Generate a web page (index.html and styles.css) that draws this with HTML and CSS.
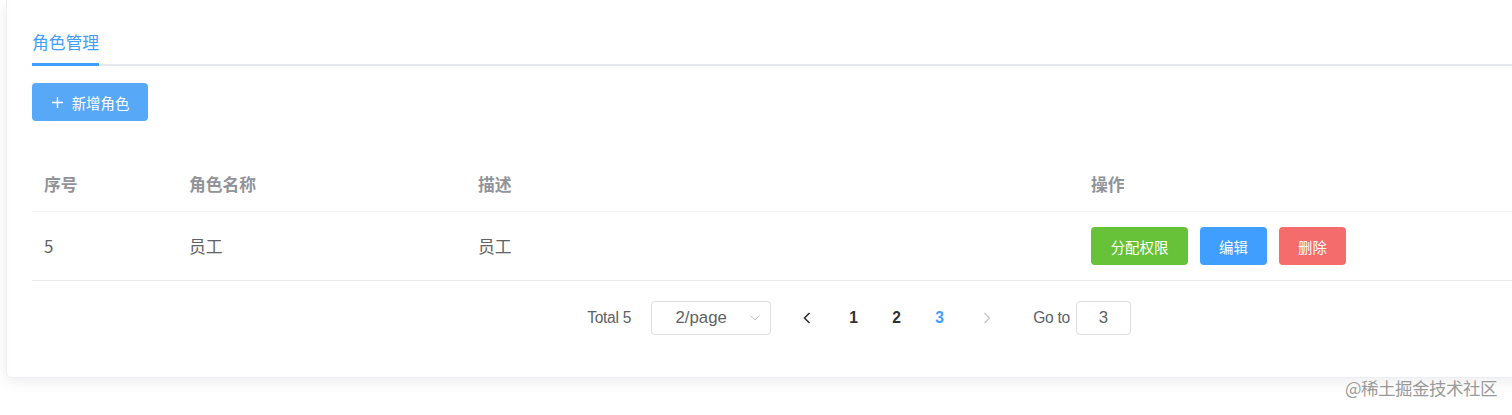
FILE: index.html
```html
<!DOCTYPE html>
<html lang="zh">
<head>
<meta charset="utf-8">
<title>角色管理</title>
<link rel="stylesheet" href="styles.css">
</head>
<body>
<div class="card">
  <div class="tabs">
    <div class="tab active">角色管理</div>
  </div>
  <div class="toolbar">
    <button class="btn btn-add">
      <svg class="plus" width="11" height="11" viewBox="0 0 11 11"><path d="M5.5 0v11M0 5.5h11" stroke="#fff" stroke-width="1.4" fill="none"/></svg>
      <span>新增角色</span>
    </button>
  </div>
  <div class="table">
    <div class="row head">
      <div class="cell">序号</div>
      <div class="cell">角色名称</div>
      <div class="cell">描述</div>
      <div class="cell">操作</div>
    </div>
    <div class="row body">
      <div class="cell">5</div>
      <div class="cell">员工</div>
      <div class="cell">员工</div>
      <div class="cell actions">
        <button class="btn sm green">分配权限</button>
        <button class="btn sm blue">编辑</button>
        <button class="btn sm red">删除</button>
      </div>
    </div>
  </div>
  <div class="pagination">
    <span class="total">Total 5</span>
    <div class="select">
      <span class="select-text">2/page</span>
      <svg class="select-arrow" width="10" height="6" viewBox="0 0 10 6"><path d="M0.5 0.5L5 5L9.5 0.5" stroke="#c0c4cc" stroke-width="1" fill="none"/></svg>
    </div>
    <span class="nav prev"><svg width="8" height="12" viewBox="0 0 8 12"><path d="M6.5 1L1.5 6L6.5 11" stroke="#303133" stroke-width="1.6" fill="none"/></svg></span>
    <ul class="pager">
      <li>1</li>
      <li>2</li>
      <li class="current">3</li>
    </ul>
    <span class="nav next"><svg width="8" height="12" viewBox="0 0 8 12"><path d="M1.5 1L6.5 6L1.5 11" stroke="#c0c4cc" stroke-width="1.3" fill="none"/></svg></span>
    <span class="jumper">Go to</span>
    <div class="jump-input">3</div>
  </div>
</div>
<div class="watermark">@稀土掘金技术社区</div>
</body>
</html>
```
FILE: styles.css
```css
html, body {
  margin: 0;
  padding: 0;
  background: #fff;
  overflow: hidden;
  width: 1512px;
  height: 415px;
  font-family: "Noto Sans CJK SC", "Liberation Sans", sans-serif;
  position: relative;
}

.card {
  box-sizing: border-box;
  width: 1706px;
  margin-left: 6px;
  background: #fff;
  border: 1px solid #ebeef5;
  border-top: 0;
  border-radius: 0 0 5px 5px;
  box-shadow: 0 3px 14px rgba(0, 0, 0, 0.08);
  padding: 17px 25px 42px 25px;
}

.tabs {
  display: flex;
  height: 47px;
  border-bottom: 2px solid #e4e7ed;
}

.tab {
  font-size: 16.8px;
  color: #303133;
  box-sizing: border-box;
}

.tab.active {
  color: #409eff;
  border-bottom: 3px solid #409eff;
  margin-bottom: -2px;
  height: 49px;
  padding-top: 3px;
  line-height: 44px;
}

.toolbar {
  margin-top: 17px;
  display: flex;
}

.btn {
  border: 0;
  border-radius: 4px;
  color: #fff;
  font-family: "Noto Sans CJK SC", sans-serif;
  font-size: 14.4px;
  height: 38px;
  display: inline-flex;
  align-items: center;
  justify-content: center;
  cursor: pointer;
}

.btn-add {
  background: #58a8f8;
  width: 116px;
  padding: 0;
  gap: 9px;
}

.btn-add .plus {
  margin-left: 1px;
}

.table {
  margin-top: 34px;
  font-size: 16.8px;
}

.row {
  display: grid;
  grid-template-columns: 145px 289px 613px 1fr;
  align-items: center;
  border-bottom: 1px solid #ebeef5;
}

.row.head {
  height: 56px;
  color: #909399;
  font-weight: bold;
  border-bottom-color: #f2f3f6;
}

.row.head .cell {
  padding-top: 2px;
}

.row.body {
  height: 68px;
  color: #606266;
  border-bottom-color: #e6e8ec;
}

.cell {
  padding-left: 12px;
}

.actions {
  display: flex;
  gap: 12px;
}

.btn.sm {
  padding: 0;
}

.green { background: #67c23a; width: 97px; }
.blue { background: #409eff; width: 67px; }
.red { background: #f56c6c; width: 67px; }

.pagination {
  margin-top: 20px;
  display: flex;
  align-items: center;
  justify-content: center;
  height: 34px;
  font-family: "Liberation Sans", "Noto Sans CJK SC", sans-serif;
  font-size: 15.6px;
  color: #606266;
}

.total {
  width: 46px;
  margin-right: 18px;
  white-space: nowrap;
  letter-spacing: -0.3px;
}

.select {
  box-sizing: border-box;
  width: 120px;
  height: 34px;
  border: 1px solid #dcdfe6;
  border-radius: 4px;
  display: flex;
  align-items: center;
}

.select-text {
  width: 66px;
  margin-left: 16px;
  text-align: center;
  font-size: 16.8px;
  color: #606266;
}

.select-arrow {
  margin-left: auto;
  margin-right: 10px;
}

.nav {
  width: 43px;
  height: 34px;
  display: flex;
  align-items: center;
  justify-content: center;
}

.prev { margin-left: 14px; margin-right: 4px; }
.next { margin-left: 4px; }

.pager {
  list-style: none;
  margin: 0;
  padding: 0;
  display: flex;
}

.pager li {
  width: 43px;
  height: 34px;
  line-height: 34px;
  text-align: center;
  font-weight: bold;
  color: #303133;
  font-size: 15.6px;
}

.pager li.current {
  color: #409eff;
}

.jumper {
  margin-left: 25px;
  margin-right: 6px;
  white-space: nowrap;
  letter-spacing: -0.3px;
}

.jump-input {
  box-sizing: border-box;
  width: 55px;
  height: 34px;
  border: 1px solid #dcdfe6;
  border-radius: 4px;
  text-align: center;
  line-height: 32px;
  font-size: 16.8px;
  color: #606266;
}

.watermark {
  position: absolute;
  right: 15px;
  top: 375px;
  font-size: 17.5px;
  color: #9a9a9a;
  letter-spacing: -0.5px;
  text-shadow: 0 0 1px #fff;
}
```
